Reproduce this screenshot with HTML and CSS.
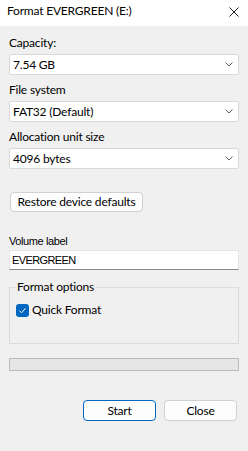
FILE: index.html
```html
<!DOCTYPE html>
<html lang="en">
<head>
<meta charset="utf-8">
<title>Format EVERGREEN (E:)</title>
<link rel="stylesheet" href="styles.css">
</head>
<body>
<div class="window">
  <div class="titlebar">
    <span class="title">Format EVERGREEN (E:)</span>
    <svg class="close" width="10" height="10" viewBox="0 0 10 10"><path d="M0.5 0.5 L9.5 9.5 M9.5 0.5 L0.5 9.5" stroke="#1a1a1a" stroke-width="1" fill="none"/></svg>
  </div>
  <div class="content">
    <div class="field">
      <div class="label">Capacity:</div>
      <div class="combo"><span>7.54 GB</span><svg class="chev" width="8" height="5" viewBox="0 0 8 5"><polyline points="0.5,0.5 4,4 7.5,0.5" fill="none" stroke="#606060" stroke-width="1"/></svg></div>
    </div>
    <div class="field">
      <div class="label">File system</div>
      <div class="combo"><span>FAT32 (Default)</span><svg class="chev" width="8" height="5" viewBox="0 0 8 5"><polyline points="0.5,0.5 4,4 7.5,0.5" fill="none" stroke="#606060" stroke-width="1"/></svg></div>
    </div>
    <div class="field">
      <div class="label">Allocation unit size</div>
      <div class="combo"><span>4096 bytes</span><svg class="chev" width="8" height="5" viewBox="0 0 8 5"><polyline points="0.5,0.5 4,4 7.5,0.5" fill="none" stroke="#606060" stroke-width="1"/></svg></div>
    </div>
    <button class="restore">Restore device defaults</button>
    <div class="vol">
      <div class="vol-label">Volume label</div>
      <div class="input">EVERGREEN</div>
    </div>
    <fieldset class="group">
      <legend>Format options</legend>
      <div class="check">
        <span class="box"><svg width="13" height="13" viewBox="0 0 13 13"><polyline points="3.5,6.8 5.5,8.8 9.5,4.3" fill="none" stroke="#ffffff" stroke-width="1"/></svg></span>
        <span>Quick Format</span>
      </div>
    </fieldset>
    <div class="progress"></div>
    <div class="actions">
      <button class="btn primary">Start</button>
      <button class="btn">Close</button>
    </div>
  </div>
</div>
</body>
</html>
```

FILE: styles.css
```css
html, body {
  margin: 0;
  padding: 0;
}
body {
  background: #f0f0f0;
  font-family: Lato, "Liberation Sans", Arial, sans-serif;
  font-size: 12px;
  letter-spacing: -0.2px;
  color: #000;
}
.window {
  width: 248px;
  height: 451px;
  background: #f0f0f0;
}
.titlebar {
  height: 26px;
  background: #ffffff;
  display: flex;
  align-items: flex-start;
  justify-content: space-between;
  padding: 0 9px 0 7px;
  box-sizing: border-box;
}
.title {
  line-height: 16px;
  margin-top: 3px;
}
.close {
  margin-top: 7px;
  display: block;
}
.content {
  padding: 0 9px;
  display: flex;
  flex-direction: column;
}
.field {
  margin-top: 7px;
}
.field:first-child {
  margin-top: 9px;
}
.label {
  line-height: 16px;
  margin-bottom: 3px;
}
.combo {
  height: 21px;
  box-sizing: border-box;
  background: #fff;
  border: 1px solid #d9d9d9;
  border-radius: 2px;
  display: flex;
  align-items: center;
  justify-content: space-between;
  padding: 0 5px 0 3px;
  line-height: 16px;
}
.chev {
  display: block;
}
.restore {
  align-self: flex-start;
  margin: 23px 0 0 1px;
  height: 20px;
  width: 133px;
  padding: 0;
  font: inherit;
  letter-spacing: inherit;
  line-height: 16px;
  background: #fdfdfd;
  border: 1px solid #d0d0d0;
  border-radius: 4px;
  color: #000;
}
.vol {
  margin-top: 22px;
}
.vol-label {
  font-family: "Liberation Sans", Arial, sans-serif;
  font-size: 11px;
  letter-spacing: -0.4px;
  line-height: 14px;
  margin-bottom: 2px;
}
.input {
  height: 20px;
  box-sizing: border-box;
  background: #fff;
  border: 1px solid #e3e3e3;
  border-bottom-color: #878787;
  font-family: "Liberation Sans", Arial, sans-serif;
  font-size: 11px;
  letter-spacing: -0.6px;
  line-height: 18px;
  padding-left: 2px;
}
.group {
  margin: 9px 0 0 0;
  padding: 7px 6px 25px 6px;
  border: 1px solid #dcdcdc;
  min-width: 0;
}
.group legend {
  padding: 0 1px;
  line-height: 16px;
}
.check {
  display: flex;
  align-items: center;
  gap: 3px;
  line-height: 16px;
}
.box {
  width: 13px;
  height: 13px;
  background: #0067c0;
  border-radius: 3px;
  display: block;
}
.box svg {
  display: block;
}
.progress {
  margin-top: 14px;
  height: 13px;
  box-sizing: border-box;
  background: #e6e6e6;
  border: 1px solid #bcbcbc;
}
.actions {
  margin-top: 29px;
  display: flex;
  justify-content: flex-end;
  gap: 8px;
  padding-right: 2px;
}
.btn {
  width: 73px;
  height: 21px;
  padding: 0;
  font: inherit;
  letter-spacing: inherit;
  line-height: 16px;
  background: #fdfdfd;
  border: 1px solid #d0d0d0;
  border-radius: 4px;
  color: #000;
}
.btn.primary {
  border-color: #0067c0;
}
```
